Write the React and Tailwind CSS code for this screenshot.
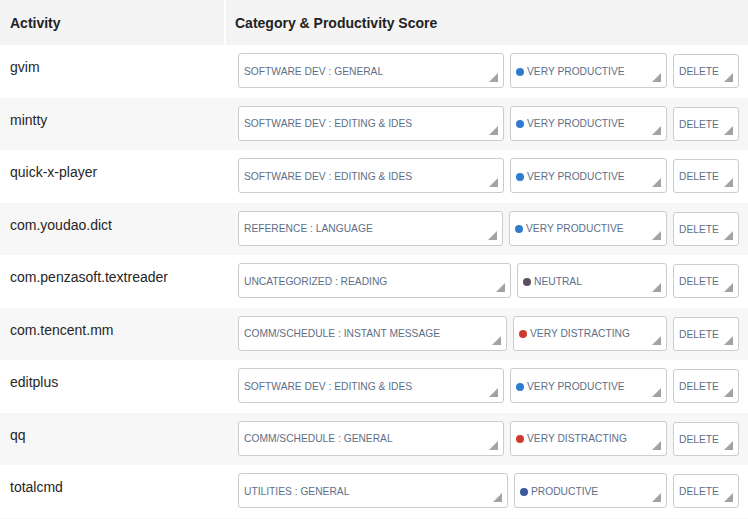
import React from 'react';

const SCORES = {
  vp: { label: 'VERY PRODUCTIVE', dot: 'bg-[#2f7bd0]' },
  p: { label: 'PRODUCTIVE', dot: 'bg-[#3a5a9c]' },
  n: { label: 'NEUTRAL', dot: 'bg-[#5c4c62]' },
  vd: { label: 'VERY DISTRACTING', dot: 'bg-[#cf3a2e]' },
};

const rows = [
  { name: 'gvim', cat: 'SOFTWARE DEV : GENERAL', score: 'vp', catW: 266 },
  { name: 'mintty', cat: 'SOFTWARE DEV : EDITING & IDES', score: 'vp', catW: 266 },
  { name: 'quick-x-player', cat: 'SOFTWARE DEV : EDITING & IDES', score: 'vp', catW: 266 },
  { name: 'com.youdao.dict', cat: 'REFERENCE : LANGUAGE', score: 'vp', catW: 265 },
  { name: 'com.penzasoft.textreader', cat: 'UNCATEGORIZED : READING', score: 'n', catW: 273 },
  { name: 'com.tencent.mm', cat: 'COMM/SCHEDULE : INSTANT MESSAGE', score: 'vd', catW: 269 },
  { name: 'editplus', cat: 'SOFTWARE DEV : EDITING & IDES', score: 'vp', catW: 266 },
  { name: 'qq', cat: 'COMM/SCHEDULE : GENERAL', score: 'vd', catW: 266 },
  { name: 'totalcmd', cat: 'UTILITIES : GENERAL', score: 'p', catW: 270 },
];

const Grip = () => (
  <svg width="9" height="9" viewBox="0 0 9 9" className="absolute right-[5px] bottom-[5px]">
    <polygon points="9,0 9,9 0,9" fill="#a3a3a3" />
  </svg>
);

const Box = ({ width, height, children }) => (
  <div
    className="relative flex items-center border border-[#cccccc] rounded-[3px] bg-white pl-[5px] pt-[2px] text-[10.25px] text-[#5d6f88] shrink-0"
    style={{ width, height }}
  >
    {children}
    <Grip />
  </div>
);

export default function App() {
  return (
    <div className="w-[748px] bg-white text-[#222] font-['Liberation_Sans',Arial,sans-serif]">
      <div className="flex h-[45px] gap-[2px] font-bold text-[14px]">
        <div className="w-[224px] bg-[#f4f4f4] pl-[10px] pt-[1px] flex items-center">Activity</div>
        <div className="flex-1 bg-[#f4f4f4] pl-[9px] pt-[1px] flex items-center">Category &amp; Productivity Score</div>
      </div>
      {rows.map((r, i) => {
        const s = SCORES[r.score];
        const prodW = 667 - (238 + r.catW + 6);
        return (
          <div key={r.name} className={`flex h-[52.5px] ${i % 2 === 1 ? 'bg-[#f7f7f7]' : 'bg-white'}`}>
            <div className="w-[226px] pl-[10px] pt-[13px] text-[14px] leading-[18px] text-[#262626]">{r.name}</div>
            <div className="flex items-end gap-[6px] pl-[12px] pt-[8px] h-[43px]">
              <Box width={r.catW} height={35}>{r.cat}</Box>
              <Box width={prodW} height={35}>
                <span className={`w-[8px] h-[8px] rounded-full mr-[3px] ${s.dot}`} />
                {s.label}
              </Box>
              <Box width={66} height={34}>DELETE</Box>
            </div>
          </div>
        );
      })}
      <div className="h-[10px] bg-[#f7f7f7]" />
    </div>
  );
}
